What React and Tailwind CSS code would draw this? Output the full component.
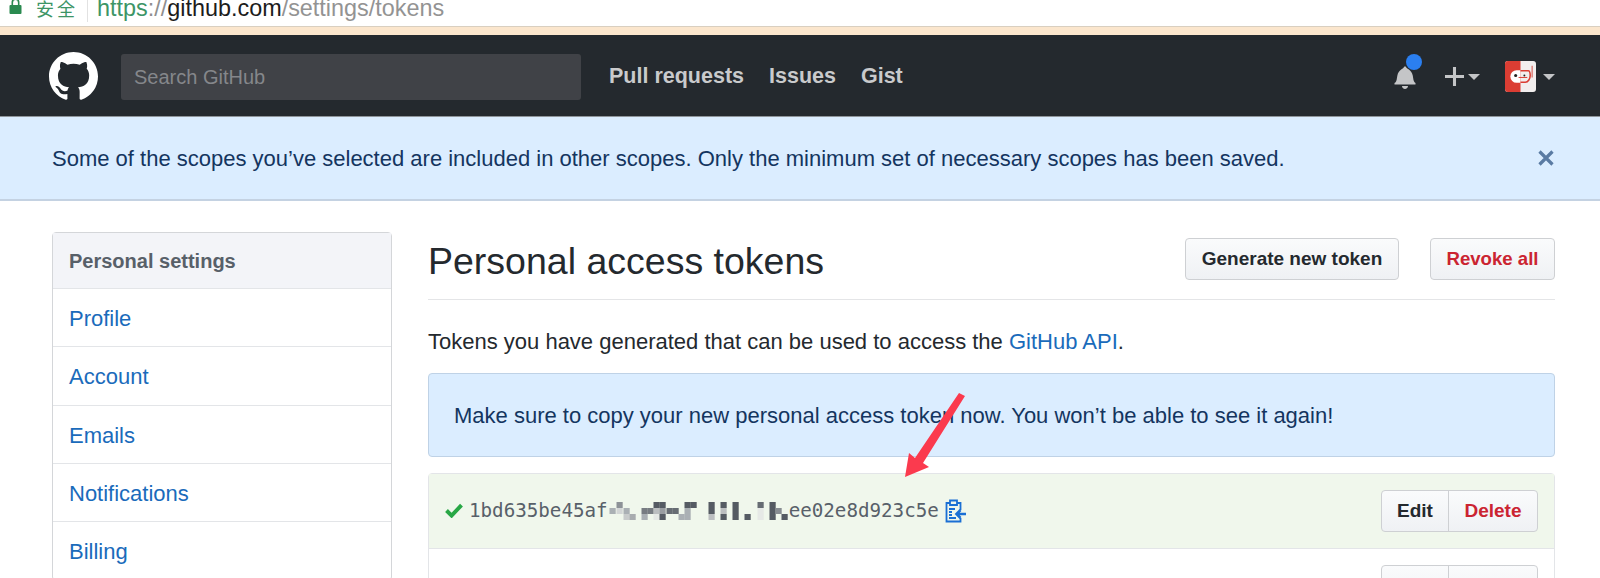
const sideItems = ['Profile', 'Account', 'Emails', 'Notifications', 'Billing'];

// censored part of the token, cells read off the screenshot
const blurCells = [
  [7, 0, '#8d9297'], [0, 6, '#aab0b4'], [7, 6, '#d3d6d6'], [14, 6, '#aab0b4'], [14, 12, '#c8cbcb'], [20, 12, '#a8acaf'],
  [32, 6, '#777c82'], [38, 6, '#777c82'], [44, 0, '#555b63'], [50, 0, '#555b63'], [44, 6, '#bbbec0'], [50, 6, '#999da1'],
  [32, 12, '#aab0b4'], [44, 12, '#e6e9e6'], [50, 12, '#555b63'], [57, 6, '#666c73'], [63, 6, '#666c73'],
  [75, 0, '#555b63'], [81, 0, '#555b63'], [75, 6, '#aab0b4'], [69, 12, '#aab0b4'], [75, 12, '#aab0b4'],
  [99, 0, '#555b63'], [99, 6, '#555b63'], [99, 12, '#bbbec0'],
  [111, 0, '#555b63'], [111, 6, '#bbbec0'], [111, 12, '#555b63'],
  [123, 0, '#555b63'], [123, 6, '#555b63'], [123, 12, '#555b63'],
  [135, 12, '#555b63'], [148, 0, '#666c73'], [148, 6, '#e6e9e6'], [148, 12, '#e6e9e6'],
  [160, 0, '#555b63'], [160, 6, '#555b63'], [160, 12, '#555b63'], [166, 6, '#888d92'], [172, 12, '#555b63'],
];

function GithubMark() {
  return (
    <svg viewBox="0 0 16 16" className="h-[49px] w-[49px]" fill="#ffffff">
      <path d="M8 0C3.58 0 0 3.58 0 8c0 3.54 2.29 6.53 5.47 7.59.4.07.55-.17.55-.38 0-.19-.01-.82-.01-1.49-2.01.37-2.53-.49-2.69-.94-.09-.23-.48-.94-.82-1.13-.28-.15-.68-.52-.01-.53.63-.01 1.08.58 1.23.82.72 1.21 1.87.87 2.33.66.07-.52.28-.87.51-1.07-1.78-.2-3.64-.89-3.64-3.95 0-.87.31-1.59.82-2.15-.08-.2-.36-1.02.08-2.12 0 0 .67-.21 2.2.82.64-.18 1.32-.27 2-.27.68 0 1.36.09 2 .27 1.53-1.04 2.2-.82 2.2-.82.44 1.1.16 1.92.08 2.12.51.56.82 1.27.82 2.15 0 3.07-1.87 3.75-3.65 3.95.29.25.54.73.54 1.48 0 1.07-.01 1.93-.01 2.2 0 .21.15.46.55.38A8.013 8.013 0 0016 8c0-4.42-3.58-8-8-8z" />
    </svg>
  );
}

function Caret() {
  return <span className="block h-0 w-0 border-x-[6px] border-t-[6px] border-x-transparent border-t-[#c4c5c7]" />;
}

function TokenButtons() {
  return (
    <div className="flex h-[42px] rounded-[4px] border border-[#ced0d3] bg-gradient-to-b from-[#fafbfc] to-[#eff1f4] text-[19px] font-bold">
      <span className="flex w-[67px] items-center justify-center border-r border-[#ced0d3] text-[#24292e]">Edit</span>
      <span className="flex w-[88px] items-center justify-center text-[#cb2431]">Delete</span>
    </div>
  );
}

export default function App() {
  return (
    <div className="relative h-[578px] overflow-hidden bg-white font-['Liberation_Sans',sans-serif] text-[#24292e]">
      <div className="flex h-[27px] items-start overflow-hidden border-b border-[#d9cfc0] text-[23.4px] leading-[26px]">
        <svg viewBox="0 0 12 16" className="ml-[9px] mt-[-2px] h-[16px] w-[13px]" fill="#2a8a50">
          <path d="M2 7V4.5a4 4 0 018 0V7h1a1 1 0 011 1v7a1 1 0 01-1 1H1a1 1 0 01-1-1V8a1 1 0 011-1h1zm1.6 0h4.8V4.5a2.4 2.4 0 00-4.8 0V7z" />
        </svg>
        <span className="ml-[14px] mt-[-5px] font-['Noto_Sans_CJK_SC',sans-serif] text-[18px] tracking-[3px] text-[#3d9566]">安全</span>
        <span className="ml-[9px] mr-[9px] h-[22px] w-px bg-[#e2e2e2]" />
        <span className="mt-[-5px] text-[#3d9566]">https</span>
        <span className="mt-[-5px] text-[#8f8f8f]">://</span>
        <span className="mt-[-5px] text-[#1c1c1c]">github.com</span>
        <span className="mt-[-5px] text-[#939393]">/settings/tokens</span>
      </div>
      <div className="h-[8px] bg-[#fbe6cd]" />

      <header className="flex h-[82px] items-center border-b border-[#8f959a] bg-[#24292e] pl-[49px] pr-[45px] pt-[2px]">
        <GithubMark />
        <div className="ml-[23px] flex h-[46px] w-[460px] items-center rounded-[3px] bg-[#404247] pl-[13px] text-[20px] text-[#85878b]">
          Search GitHub
        </div>
        <nav className="ml-[28px] flex gap-[25px] text-[21.5px] font-bold text-[#c9cacc]">
          <span>Pull requests</span>
          <span>Issues</span>
          <span>Gist</span>
        </nav>
        <div className="ml-auto flex items-center">
          <div className="relative mr-[29px] h-[24px] w-[22px]">
            <svg viewBox="0 0 14 16" className="h-[24px] w-[22px]" fill="#c4c5c7">
              <path d="M14 12v1H0v-1l.73-.58c.77-.77.81-2.55 1.19-4.42C2.69 3.23 6 2 6 2c0-.55.45-1 1-1s1 .45 1 1c0 0 3.39 1.23 4.16 5 .38 1.88.42 3.66 1.19 4.42L14 12zm-7 4c1.11 0 2-.89 2-2H5c0 1.11.89 2 2 2z" />
            </svg>
            <span className="absolute left-[12px] top-[-11px] h-[16px] w-[16px] rounded-full bg-[#2b7ff0]" />
          </div>
          <svg viewBox="0 0 20 20" className="h-[19px] w-[19px]" fill="#c4c5c7">
            <path d="M8.4 0h3.2v8.4H20v3.2h-8.4V20H8.4v-8.4H0V8.4h8.4z" />
          </svg>
          <span className="ml-[4px] mr-[25px]"><Caret /></span>
          <svg viewBox="0 0 32 32" className="mr-[7px] h-[31px] w-[31px]">
            <rect width="32" height="32" rx="3" fill="#f2eeee" />
            <path d="M3 0h13v32H3a3 3 0 01-3-3V3a3 3 0 013-3z" fill="#db3d33" />
            <path d="M16 9.5h-4a6.5 6.5 0 000 13h4z" fill="#ffffff" />
            <path d="M16 10h8c1 0 2 2 2 5s-2 7-5 7h-5" fill="none" stroke="#db3d33" strokeWidth="1.6" />
            <circle cx="11" cy="15" r="1.6" fill="#222222" />
            <circle cx="20" cy="15" r="1" fill="#222222" />
            <path d="M14 17h9" stroke="#db3d33" strokeWidth="1" />
            <path d="M28 5v12" stroke="#d8645c" strokeWidth="1.2" />
          </svg>
          <Caret />
        </div>
      </header>

      <div className="flex h-[84px] items-center justify-between border-b-2 border-[#c4d2e2] bg-[#dbedff] pl-[52px] pr-[46px] text-[22px] text-[#143560]">
        <p>Some of the scopes you’ve selected are included in other scopes. Only the minimum set of necessary scopes has been saved.</p>
        <svg viewBox="0 0 16 16" className="h-[16px] w-[16px]" fill="none" stroke="#5a7ba3" strokeWidth="3.2">
          <path d="M1.5 1.5l13 13M14.5 1.5l-13 13" />
        </svg>
      </div>

      <div className="flex items-start pl-[52px] pr-[45px] pt-[31px]">
        <aside className="w-[340px] shrink-0 rounded-[4px] border border-[#d4d6d9] text-[22px] text-[#1a6bbb]">
          <div className="flex h-[56px] items-center border-b border-[#e3e5e8] bg-[#f3f4f8] pl-[16px] text-[20px] font-bold text-[#586069]">
            Personal settings
          </div>
          {sideItems.map((item) => (
            <div key={item} className="flex h-[58.3px] items-center border-b border-[#e3e5e8] pl-[16px] pt-[2px]">
              {item}
            </div>
          ))}
        </aside>

        <main className="ml-[36px] min-w-0 flex-1">
          <div className="flex h-[68px] items-start justify-between border-b border-[#e4e5e7]">
            <h1 className="mt-[7px] text-[37.5px] leading-[44px]">Personal access tokens</h1>
            <div className="mt-[6px] flex gap-[31px] font-bold">
              <span className="flex h-[42px] w-[214px] items-center justify-center rounded-[4px] border border-[#ced0d3] bg-gradient-to-b from-[#fafbfc] to-[#eff1f4] text-[19px]">
                Generate new token
              </span>
              <span className="flex h-[42px] w-[125px] items-center justify-center rounded-[4px] border border-[#ced0d3] bg-gradient-to-b from-[#fafbfc] to-[#eff1f4] text-[18.6px] text-[#cb2431]">
                Revoke all
              </span>
            </div>
          </div>

          <p className="mt-[29px] text-[22px] leading-[26px]">
            Tokens you have generated that can be used to access the <span className="text-[#1a6bbb]">GitHub API</span>.
          </p>

          <div className="mt-[18px] flex h-[84px] items-center rounded-[4px] border border-[#bfd2e6] bg-[#dbedff] pl-[25px] text-[22px] text-[#143560]">
            Make sure to copy your new personal access token now. You won’t be able to see it again!
          </div>

          <div className="mt-[16px] rounded-t-[4px] border border-[#e3e5e8]">
            <div className="flex h-[75px] items-center justify-between border-b border-[#e3e5e8] bg-[#f0f7ec] pl-[16px] pr-[16px]">
              <div className="flex items-center font-['DejaVu_Sans_Mono',monospace] text-[19.2px] text-[#586069]">
                <svg viewBox="0 0 12 10" className="mr-[6px] h-[15px] w-[18px]" fill="none" stroke="#28a745" strokeWidth="2.6">
                  <path d="M1 5l3.4 3.4L11 1.4" />
                </svg>
                <span>1bd635be45af</span>
                <svg viewBox="0 0 178 18" className="h-[18px] w-[181px]">
                  {blurCells.map(([x, y, fill]) => (
                    <rect key={`${x}-${y}`} x={x} y={y} width="6.2" height="6" fill={fill} />
                  ))}
                </svg>
                <span>ee02e8d923c5e</span>
                <svg viewBox="0 0 21 24" className="ml-[6px] h-[24px] w-[21px]" fill="none" stroke="#1a6fd4" strokeWidth="1.8">
                  <path d="M5 4H1.5v18.5h14V19M15.5 11V4H12" />
                  <path d="M5 1.5h7V6H5zM4 10h6M4 13h3M4 16h3M4 19h7" />
                  <path d="M21 15h-9M15.5 11l-4 4 4 4" strokeWidth="2.6" />
                </svg>
              </div>
              <TokenButtons />
            </div>
            <div className="flex h-[75px] items-start pl-[34px] pr-[16px] pt-[16px] text-[17px] text-[#6a737d]">
              <span className="mt-[7px]">key</span>
              <span className="ml-auto mr-[36px] mt-[7px]">Last used within the last week</span>
              <TokenButtons />
            </div>
          </div>
        </main>
      </div>

      {/* red annotation arrow on top of the page */}
      <svg viewBox="0 0 70 105" className="absolute left-[900px] top-[390px] h-[105px] w-[70px]" fill="#fb3a4e">
        <path d="M59 3l6 3-42 67 6 4L5 87l4-24 6 5z" />
      </svg>
    </div>
  );
}
